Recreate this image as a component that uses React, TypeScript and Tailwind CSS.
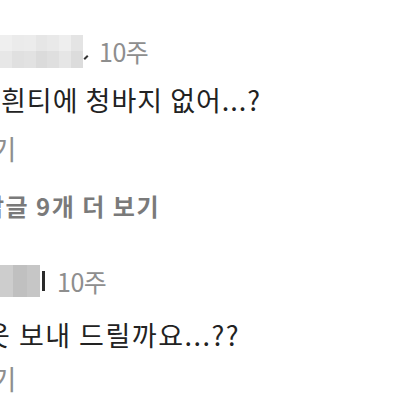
import React from "react";

const font = { fontFamily: '"Noto Sans CJK KR", "Noto Sans", sans-serif' };

function Mosaic1() {
  const cols = ["#efefef", "#ebebeb", "#ececec", "#e6e6e6", "#e9e9e9", "#eeeeee", "#e4e4e4"];
  const cols2 = ["#e7e7e7", "#e0e0e0", "#e2e2e2", "#dbdbdb", "#dfdfdf", "#e6e6e6", "#dcdcdc"];
  return (
    <div className="flex flex-col w-[83px] h-[33px]">
      <div className="flex h-1/2">
        {cols.map((c, i) => (
          <div key={i} className="flex-1" style={{ background: c }} />
        ))}
      </div>
      <div className="flex h-1/2">
        {cols2.map((c, i) => (
          <div key={i} className="flex-1" style={{ background: c }} />
        ))}
      </div>
    </div>
  );
}

export default function App() {
  return (
    <div className="w-[400px] h-[400px] overflow-hidden bg-white text-[#222]" style={font}>
      <div className="flex flex-col pt-[31px]">
        {/* row 1 */}
        <div className="flex items-center h-[40px]">
          <Mosaic1 />
          <div className="w-[2px] h-[5px] bg-[#333] ml-[2px] mt-[12px] rotate-45" />
          <span className="ml-[12px] text-[25px] leading-none tracking-[-0.5px] text-[#8e8e8e]">10주</span>
        </div>
        {/* row 2 */}
        <div className="flex items-center h-[40px] mt-[8px]">
          <span className="text-[27px] leading-none tracking-[1px] ml-[1px] whitespace-nowrap">흰티에 청바지 없어...?</span>
        </div>
        {/* row 3 */}
        <div className="flex items-center h-[40px] mt-[9px]">
          <span className="text-[27px] leading-none text-[#8e8e8e] ml-[-89px] whitespace-nowrap">답글 달기</span>
        </div>
        {/* row 4 */}
        <div className="flex items-center h-[40px] mt-[18px]">
          <span className="text-[24px] leading-none font-semibold tracking-[1.5px] text-[#7a7a7a] ml-[-18px] whitespace-nowrap">답글 9개 더 보기</span>
        </div>
        {/* row 5 */}
        <div className="flex items-center h-[40px] mt-[35px]">
          <div className="flex w-[40px] h-[32px]">
            <div className="flex-1 bg-[#cdcdcd]" />
            <div className="flex-1 bg-[#c0c0c0]" />
            <div className="flex-1 bg-[#c6c6c6]" />
          </div>
          <div className="w-[3px] h-[20px] bg-[#2a2a2a] ml-[2px]" />
          <span className="ml-[12px] text-[25px] leading-none tracking-[-0.5px] text-[#8e8e8e]">10주</span>
        </div>
        {/* row 6 */}
        <div className="flex items-center h-[40px] mt-[13px]">
          <span className="text-[27px] leading-none tracking-[1.5px] ml-[-15px] whitespace-nowrap">옷 보내 드릴까요...??</span>
        </div>
        {/* row 7 */}
        <div className="flex items-center h-[40px] mt-[4px]">
          <span className="text-[27px] leading-none text-[#8e8e8e] ml-[-89px] whitespace-nowrap">답글 달기</span>
        </div>
      </div>
    </div>
  );
}
